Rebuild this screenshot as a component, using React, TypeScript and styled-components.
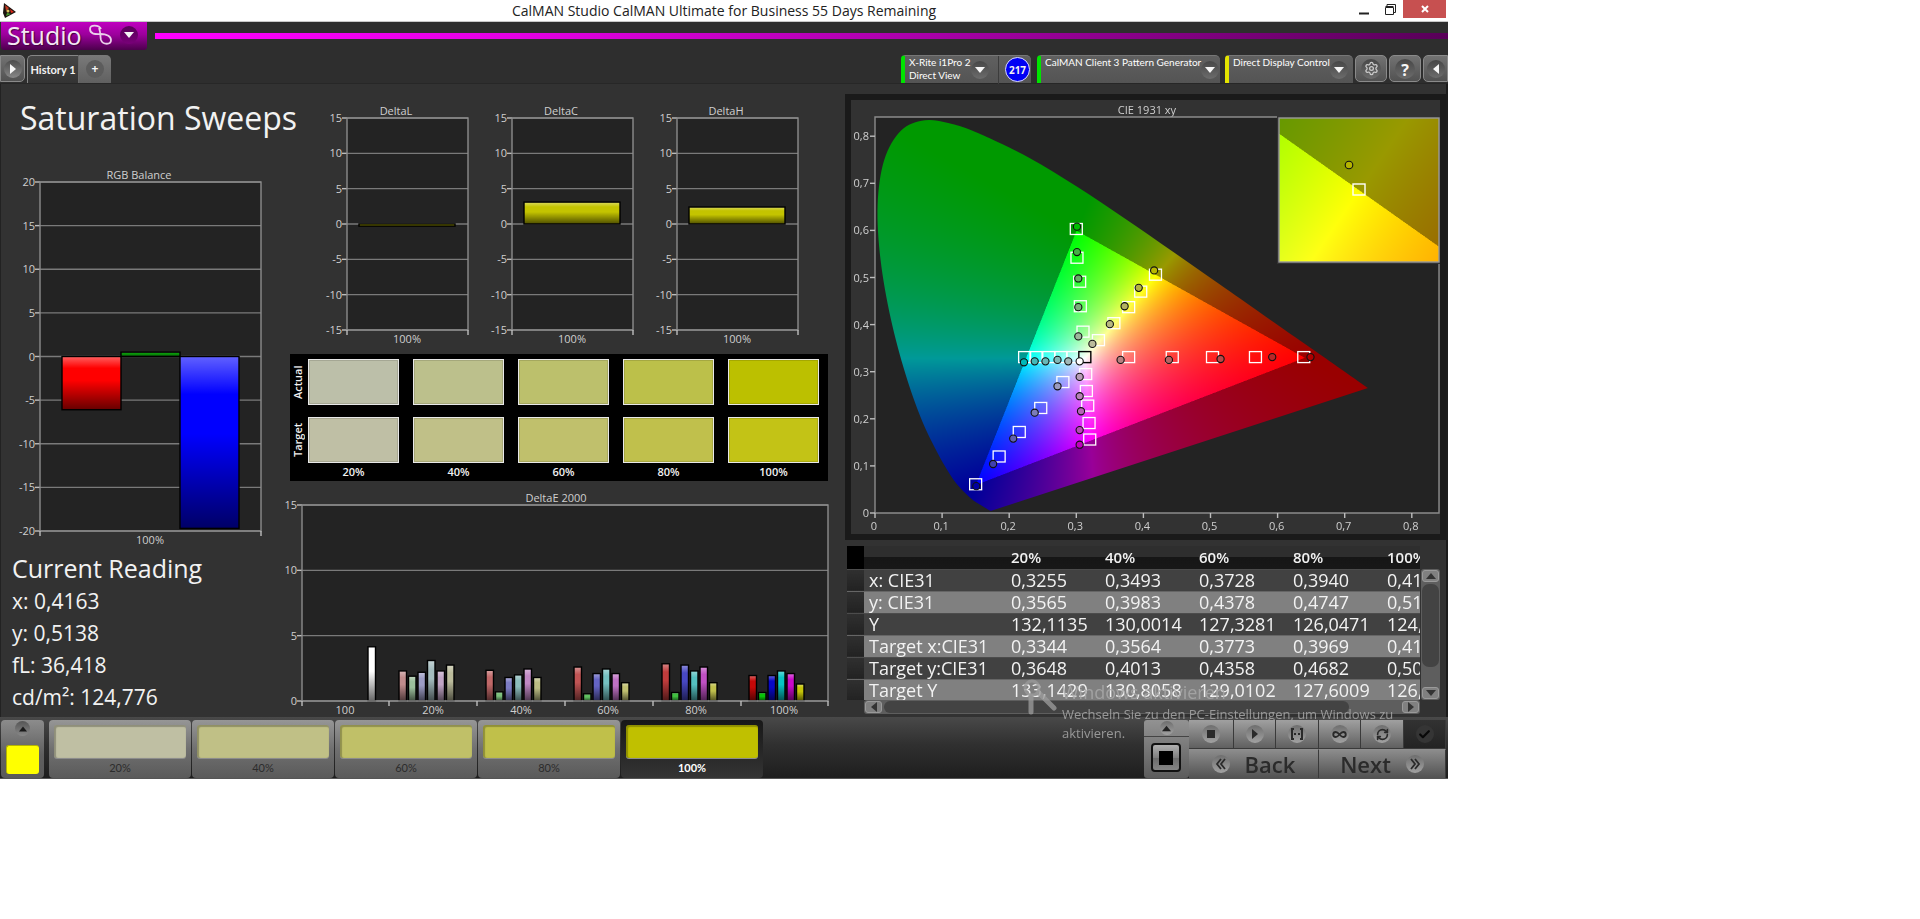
import React, { useEffect, useRef } from "react";
import styled, { createGlobalStyle } from "styled-components";
import { Check, Infinity as InfinityIcon, RefreshCw, Settings } from "lucide-react";

const UI_FONT = '"Open Sans", "Noto Sans", sans-serif';
const NARROW_FONT = 'Lato, "Open Sans", sans-serif';

const GlobalStyle = createGlobalStyle`
  *, *::before, *::after { box-sizing: border-box; }
  body { margin: 0; background: #fff; font-family: ${UI_FONT}; }
  button { font: inherit; color: inherit; border: 0; padding: 0; margin: 0; background: none; cursor: pointer; }
  h1, h2, p { margin: 0; font-weight: 400; }
`;

const Desktop = styled.div`
  display: grid;
  grid-template-columns: minmax(0, 1448fr) minmax(0, 472fr);
`;

const AppWindow = styled.div`
  position: relative;
  display: flex;
  flex-direction: column;
  background: #323232;
  color: #f2f2f2;
  border-bottom: 1px solid #555;
`;

/* ---------- window frame ---------- */

const TitleBar = styled.header`
  display: grid;
  grid-template-columns: 134px 1fr 134px;
  align-items: start;
  height: 22px;
  background: #fff;
  color: #222;
  border-bottom: 1px solid #c8c8c8;
`;

const AppIcon = styled.svg`
  margin: 3px 0 0 2px;
`;

const WindowTitle = styled.h1`
  font-size: 14px;
  line-height: 22px;
  text-align: center;
  white-space: nowrap;
`;

const WindowControls = styled.div`
  display: flex;
  justify-content: flex-end;
  align-items: stretch;
  height: 18px;
  padding-right: 2px;
`;

const WindowButton = styled.button<{ $close?: boolean }>`
  display: grid;
  place-items: center;
  width: ${(p) => (p.$close ? 43 : 26)}px;
  background: ${(p) => (p.$close ? "#c75050" : "transparent")};
`;

const Brand = styled.div`
  display: flex;
  align-items: flex-start;
  gap: 8px;
  height: 30px;
  padding-left: 1px;
  background: #2e2e2e;
`;

const StudioButton = styled.button`
  display: flex;
  align-items: center;
  width: 146px;
  height: 28px;
  padding: 0 5px 3px 6px;
  gap: 6px;
  border-radius: 0 0 3px 3px;
  background: linear-gradient(#c000c0, #9c009c 45%, #4c004c);
  color: #f4e8f4;
  font-size: 25px;
  line-height: 24px;
  text-shadow: 1px 1px 1px #400040;
`;

const MagentaRule = styled.div`
  flex: 1;
  height: 6px;
  margin-top: 11px;
  background: linear-gradient(90deg, #ff00ff, #e400e4 28%, #a800a8 60%, #580058);
`;

const RoundFace = styled.span<{ $tone?: string; $size?: number }>`
  display: grid;
  place-items: center;
  flex: none;
  width: ${(p) => p.$size ?? 18}px;
  height: ${(p) => p.$size ?? 18}px;
  border-radius: 50%;
  color: #f6f6f6;
  background: ${(p) => p.$tone ?? "linear-gradient(#474747, #6c6c6c)"};
`;

const TabStrip = styled.nav`
  display: flex;
  align-items: flex-start;
  height: 32px;
  padding-top: 3px;
  background: #2e2e2e;
  border-bottom: 1px solid #272727;
`;

const IconTab = styled.button<{ $width: number; $edge?: "left" | "right" }>`
  display: grid;
  place-items: center;
  width: ${(p) => p.$width}px;
  height: 27px;
  margin-right: 2px;
  border: 1px solid #8a8a8a;
  border-radius: ${(p) => (p.$edge === "left" ? "0 5px 5px 0" : p.$edge === "right" ? "5px 0 0 5px" : "5px")};
  background: linear-gradient(#727272, #525252);
  &:last-child { margin-right: 0; }
`;

const HistoryTab = styled.button`
  height: 28px;
  width: 52px;
  border: 1px solid #868686;
  border-bottom: 0;
  border-right-color: #6a6a6a;
  border-radius: 5px 0 0 0;
  background: linear-gradient(#464646, #333);
  font-size: 11px;
  font-weight: 700;
  font-family: ${NARROW_FONT};
  white-space: nowrap;
`;

const AddTab = styled.button`
  display: grid;
  place-items: center;
  width: 32px;
  height: 28px;
  border-radius: 0 5px 0 0;
  background: linear-gradient(#7a7a7a, #606060);
  font-size: 12px;
  font-weight: 700;
  line-height: 12px;
`;

const StripSpacer = styled.div`
  flex: 1;
`;

const DeviceTab = styled.button<{ $accent: string; $width: number; $gap: number }>`
  display: flex;
  align-items: center;
  width: ${(p) => p.$width}px;
  height: 28px;
  margin-right: ${(p) => p.$gap}px;
  padding: 0 7px 0 4px;
  border-left: 4px solid ${(p) => p.$accent};
  border-top: 1px solid #777;
  border-radius: 4px 5px 0 0;
  background: linear-gradient(#606060, #545454);
  text-align: left;
`;

const DeviceLabel = styled.span`
  flex: 1;
  align-self: flex-start;
  font-family: ${NARROW_FONT};
  font-size: 10px;
  line-height: 13px;
  font-weight: 400;
  color: #fff;
  white-space: pre;
`;

const Countdown = styled.span`
  display: grid;
  place-items: center;
  flex: none;
  width: 25px;
  height: 25px;
  margin: 0 -6px 0 7px;
  border: 1px solid #dcdcff;
  border-radius: 50%;
  background: #0000f5;
  font-size: 10px;
  font-weight: 700;
`;

const TabDivider = styled.span`
  width: 1px;
  height: 28px;
  margin-left: 9px;
  background: #3c3c3c;
`;

/* ---------- work area ---------- */

const Workspace = styled.main`
  display: grid;
  grid-template-columns: minmax(0, 280fr) minmax(0, 562fr) minmax(0, 606fr);
  box-shadow: inset 1px 0 #222, inset -2px 0 #1c1c1c;
`;

const Column = styled.section`
  display: flex;
  flex-direction: column;
`;

const PageHeading = styled.h2`
  height: 80px;
  padding: 14px 0 0 20px;
  font-size: 32px;
  line-height: 40px;
  white-space: nowrap;
`;

const Readings = styled.div`
  padding: 1px 0 0 12px;
`;

const ReadingsTitle = styled.h2`
  font-size: 25px;
  line-height: 34px;
  white-space: nowrap;
`;

const Reading = styled.p`
  font-size: 21px;
  line-height: 32px;
  white-space: nowrap;
`;

const ChartSvg = styled.svg`
  display: block;
  width: 100%;
  height: auto;
  font-family: ${UI_FONT};
  font-size: 11px;
  fill: #cfcfcf;
`;

const DeltaRow = styled.div`
  display: grid;
  grid-template-columns: repeat(3, minmax(0, 1fr));
  margin: 0 27px 0 40px;
`;

const SwatchPanel = styled.div`
  display: grid;
  grid-template-columns: 4px repeat(5, minmax(0, 1fr));
  grid-template-rows: 46px 46px 18px;
  column-gap: 14px;
  row-gap: 12px;
  height: 127px;
  margin: 0 14px 0 10px;
  padding: 5px 9px 0 0;
  background: #000;
`;

const SwatchRowLabel = styled.span`
  display: grid;
  place-items: center;
  width: 16px;
  writing-mode: vertical-rl;
  transform: rotate(180deg);
  font-size: 11px;
  line-height: 16px;
  font-weight: 600;
`;

const Swatch = styled.div<{ $color: string }>`
  border: 1px solid #e8e8e8;
  background: ${(p) => p.$color};
  box-shadow: inset 0 0 0 1px rgba(0, 0, 0, 0.12);
`;

const SwatchCaption = styled.span`
  margin-top: -12px;
  font-size: 11px;
  line-height: 18px;
  font-weight: 600;
  text-align: center;
`;

const CiePanel = styled.div`
  display: grid;
  margin: 10px 2px 0 3px;
  border: 6px solid #1a1a1a;
  background: #323232;
  & > * { grid-area: 1 / 1; }
`;

const DiagramCanvas = styled.canvas`
  width: 100%;
  height: 100%;
`;

/* ---------- data grid ---------- */

const GridArea = styled.div`
  display: grid;
  grid-template-columns: minmax(0, 1fr) 20px;
  grid-template-rows: 154px 14px;
  margin: 6px 8px 3px 5px;
`;

const TableClip = styled.div`
  overflow: hidden;
`;

const DataTable = styled.table`
  border-collapse: collapse;
  table-layout: fixed;
  width: 634px;
  font-size: 18px;
  white-space: nowrap;
  th, td { padding: 0; text-align: left; font-weight: 400; }
`;

const HeadRow = styled.tr`
  height: 23px;
  font-size: 15px;
  line-height: 22px;
  background: linear-gradient(#2e2e2e 50%, #161616 50%, #181818);
  th { font-weight: 600; }
  th:first-child { background: #000; }
`;

const BodyRow = styled.tr<{ $alt: boolean }>`
  height: 22px;
  line-height: 21px;
  background: ${(p) => (p.$alt ? "#808080" : "#414141")};
  border-top: 1px solid ${(p) => (p.$alt ? "#666" : "#4c4c4c")};
  td:first-child { background: linear-gradient(#303030, #222); }
  th { padding-left: 5px; }
`;

const ScrollTrack = styled.div<{ $vertical?: boolean }>`
  display: flex;
  flex-direction: ${(p) => (p.$vertical ? "column" : "row")};
  justify-content: space-between;
  gap: 2px;
  margin: ${(p) => (p.$vertical ? "23px 0 0 1px" : "0 0 0 17px")};
  padding: 1px;
  border-radius: 3px;
  background: #5e5e5e;
`;

const ScrollButton = styled.button<{ $vertical?: boolean }>`
  display: grid;
  place-items: center;
  flex: none;
  width: 17px;
  height: 12px;
  border: 1px solid #9a9a9a;
  border-radius: 3px;
  background: #808080;
`;

const ScrollThumb = styled.div<{ $vertical?: boolean }>`
  flex: none;
  width: ${(p) => (p.$vertical ? "17px" : "84%")};
  height: ${(p) => (p.$vertical ? "83px" : "12px")};
  margin-right: auto;
  margin-bottom: ${(p) => (p.$vertical ? "auto" : "0")};
  border-radius: 7px;
  background: #434343;
`;

/* ---------- bottom bar ---------- */

const BottomBar = styled.footer`
  display: flex;
  align-items: stretch;
  height: 61px;
  padding: 3px 2px 0 1px;
  background: linear-gradient(#494949, #303030 45%, #1e1e1e);
`;

const PatternToggle = styled.button`
  display: flex;
  flex-direction: column;
  align-items: center;
  justify-content: space-between;
  width: 43px;
  height: 58px;
  padding: 1px 5px 4px;
  margin-right: 5px;
  border-radius: 4px;
  background: linear-gradient(#8c8c8c, #606060 60%, #5a5a5a);
`;

const PatternColor = styled.span`
  width: 33px;
  height: 29px;
  border-radius: 3px;
  border: 1px solid #b4b400;
  border-width: 1px 0 0 1px;
  background: #ff0;
`;

const StepButton = styled.button<{ $active?: boolean }>`
  display: flex;
  flex-direction: column;
  width: 142px;
  height: 58px;
  margin-right: 1px;
  padding: 5px 5px 0;
  border-radius: 4px;
  background: ${(p) => (p.$active ? "linear-gradient(#181818, #343434)" : "linear-gradient(#969696, #707070 50%, #5a5a5a)")};
  color: ${(p) => (p.$active ? "#fff" : "#2c2c2c")};
  font-family: ${NARROW_FONT};
  font-size: 11px;
  font-weight: ${(p) => (p.$active ? 700 : 400)};
  line-height: 20px;
  text-align: center;
`;

const StepColor = styled.span<{ $color: string }>`
  width: 100%;
  height: 34px;
  border-radius: 3px;
  background: ${(p) => p.$color};
  box-shadow: inset 1px 1px 1px 1px rgba(0, 0, 0, 0.25), 0 1px 0 #8c8c8c;
`;

const StepText = styled.span`
  width: 100%;
`;

const LevelControl = styled.div`
  position: relative;
  z-index: 2;
  display: flex;
  flex-direction: column;
  width: 45px;
  height: 58px;
  background: linear-gradient(#929292, #5c5c5c);
  border-radius: 3px;
`;

const LevelUp = styled.button`
  display: grid;
  place-items: center;
  height: 17px;
  border-bottom: 1px solid #444;
`;

const LevelWindow = styled.button`
  display: grid;
  place-items: center;
  width: 30px;
  height: 29px;
  margin: 6px auto 0 7px;
  border: 2px solid #111;
  border-radius: 4px;
  background: linear-gradient(#b0b0b0, #808080 50%, #6a6a6a 50%, #858585);
`;

const Transport = styled.div`
  position: relative;
  z-index: 2;
  display: grid;
  grid-template-columns: 45px 42px 43px 42px 43px 42px;
  grid-template-rows: 29px 29px;
`;

const TransportButton = styled.button<{ $off?: boolean }>`
  display: grid;
  place-items: center;
  border: 1px solid #3a3a3a;
  border-width: 0 1px 1px 0;
  background: ${(p) => (p.$off ? "linear-gradient(#323232, #232323)" : "linear-gradient(#a0a0a0, #606060)")};
`;

const StepNav = styled.button`
  grid-column: span 3;
  display: flex;
  align-items: center;
  justify-content: center;
  gap: 15px;
  border-right: 1px solid #3a3a3a;
  border-top: 1px solid #8e8e8e;
  background: linear-gradient(#8c8c8c, #525252);
  color: #2b2b2b;
  font-size: 22px;
  font-weight: 600;
  line-height: 26px;
`;

const BarSpacer = styled.div`
  flex: 1;
`;

/* notice of the operating system that floats over the window */
const Activation = styled.aside`
  position: absolute;
  right: 36px;
  bottom: 35px;
  display: grid;
  grid-template-columns: 39px 350px;
  color: rgba(168, 168, 168, 0.85);
  font-size: 13px;
  line-height: 19px;
  pointer-events: none;
`;

const ActivationTitle = styled.p`
  font-size: 18px;
  line-height: 26px;
`;

/* ---------- charts ---------- */

type Bar = { x: number; w: number; value: number; color: string };

type ChartProps = {
  view: string;
  title: string;
  titleX: number;
  left: number;
  right: number;
  top: number;
  bottom: number;
  min: number;
  max: number;
  ticks: number[];
  xTicks: number[];
  xLabels: { x: number; text: string }[];
  bars: Bar[];
};

function BarShade() {
  return (
    <linearGradient id="bar-shade" x1="0" y1="0" x2="0" y2="1">
      <stop offset="0" stopColor="#fff" stopOpacity="0.38" />
      <stop offset="0.22" stopColor="#fff" stopOpacity="0" />
      <stop offset="0.45" stopColor="#000" stopOpacity="0" />
      <stop offset="1" stopColor="#000" stopOpacity="0.6" />
    </linearGradient>
  );
}

function BarChart(c: ChartProps) {
  const yOf = (v: number) => c.bottom - ((v - c.min) / (c.max - c.min)) * (c.bottom - c.top);
  const base = yOf(0);
  return (
    <ChartSvg viewBox={c.view} role="img" aria-label={c.title}>
      <defs>
        <BarShade />
      </defs>
      <text x={c.titleX} y={c.top - 3} textAnchor="middle">{c.title}</text>
      <rect x={c.left} y={c.top} width={c.right - c.left} height={c.bottom - c.top} fill="#232323" />
      {c.ticks.map((t) => (
        <g key={t}>
          <line x1={c.left} x2={c.right} y1={yOf(t)} y2={yOf(t)} stroke="#7a7a7a" strokeWidth="1.4" />
          <line x1={c.left - 5} x2={c.left} y1={yOf(t)} y2={yOf(t)} stroke="#bdbdbd" strokeWidth="1.4" />
          <text x={c.left - 5} y={yOf(t) + 4} textAnchor="end">{t}</text>
        </g>
      ))}
      {c.bars.map((b, i) => {
        const y = Math.min(base, yOf(b.value));
        const h = Math.abs(base - yOf(b.value));
        return (
          <g key={i}>
            <rect x={b.x} y={y} width={b.w} height={h} fill={b.color} />
            <rect x={b.x} y={y} width={b.w} height={h} fill="url(#bar-shade)" stroke="#000" strokeWidth="1.4" />
          </g>
        );
      })}
      <rect x={c.left} y={c.top} width={c.right - c.left} height={c.bottom - c.top} fill="none" stroke="#8c8c8c" strokeWidth="1.4" />
      {c.xTicks.map((x) => (
        <line key={x} x1={x} x2={x} y1={c.bottom} y2={c.bottom + 5} stroke="#bdbdbd" strokeWidth="1.4" />
      ))}
      {c.xLabels.map((l) => (
        <text key={l.text} x={l.x} y={c.bottom + 13} textAnchor="middle">{l.text}</text>
      ))}
    </ChartSvg>
  );
}

const DELTAS = [
  { title: "DeltaL", value: -0.3, color: "#b4b400" },
  { title: "DeltaC", value: 3.1, color: "#c4c400" },
  { title: "DeltaH", value: 2.4, color: "#c4c400" },
];

const DELTA_E = [
  { label: "100", first: 368, x: 345, values: [4.15], colors: ["#ffffff"] },
  { label: "20%", first: 399, x: 433, values: [2.3, 1.9, 2.2, 3.1, 2.3, 2.75], colors: ["#c08c8c", "#9cc09c", "#9c9cc4", "#a4bcbe", "#c0a4c4", "#bcbc9c"] },
  { label: "40%", first: 486, x: 521, values: [2.35, 0.7, 1.8, 2.0, 2.45, 1.8], colors: ["#c06868", "#7cc07c", "#7c7cc4", "#8cbcbc", "#c088c4", "#bcbc84"] },
  { label: "60%", first: 574, x: 608, values: [2.6, 0.55, 2.1, 2.45, 2.1, 1.4], colors: ["#c05454", "#60c060", "#6464c4", "#74c0c0", "#c070c4", "#c0c070"] },
  { label: "80%", first: 662, x: 696, values: [2.85, 0.65, 2.75, 2.3, 2.6, 1.4], colors: ["#c03c3c", "#40c040", "#4848c4", "#54c0c0", "#c050c4", "#c0c04c"] },
  { label: "100%", first: 749, x: 784, values: [1.95, 0.65, 1.95, 2.3, 2.1, 1.3], colors: ["#c40808", "#08c408", "#0808c4", "#08c4c4", "#c808c8", "#c4c408"] },
];

/* ---------- CIE diagram ---------- */

const CIE_BOX = { x: 851, y: 100, w: 589, h: 434 };
const cieX = (x: number) => 875 + x * 671;
const cieY = (y: number) => 513 - y * 471;

const LOCUS: [number, number][] = [
  [0.1741, 0.005], [0.1714, 0.0051], [0.1644, 0.0109], [0.1566, 0.0177], [0.144, 0.0297], [0.1241, 0.0578],
  [0.1096, 0.0868], [0.0913, 0.1327], [0.0687, 0.2007], [0.0454, 0.295], [0.0235, 0.4127], [0.0082, 0.5384],
  [0.0039, 0.6548], [0.0139, 0.7502], [0.0389, 0.812], [0.0743, 0.8338], [0.1142, 0.8262], [0.1547, 0.8059],
  [0.2296, 0.7543], [0.3016, 0.6923], [0.3731, 0.6245], [0.4441, 0.5547], [0.5125, 0.4866], [0.5752, 0.4242],
  [0.627, 0.3725], [0.6658, 0.334], [0.6915, 0.3083], [0.719, 0.2809], [0.7347, 0.2653],
];

const TARGETS: [number, number][] = [
  [0.3, 0.603], [0.301, 0.542], [0.305, 0.491], [0.306, 0.439], [0.31, 0.385],
  [0.418, 0.506], [0.396, 0.47], [0.378, 0.437], [0.356, 0.403], [0.333, 0.367],
  [0.223, 0.331], [0.24, 0.331], [0.259, 0.331], [0.277, 0.331], [0.295, 0.331],
  [0.314, 0.295], [0.315, 0.259], [0.317, 0.228], [0.319, 0.191], [0.32, 0.156],
  [0.28, 0.278], [0.247, 0.223], [0.215, 0.172], [0.185, 0.12], [0.15, 0.061],
  [0.378, 0.331], [0.443, 0.331], [0.503, 0.331], [0.567, 0.331], [0.639, 0.331],
];

const READINGS: [number, number, string][] = [
  [0.301, 0.608, "#00c000"], [0.301, 0.554, "#44b044"], [0.303, 0.498, "#64b064"], [0.303, 0.437, "#7cb07c"], [0.303, 0.375, "#9cb89c"],
  [0.416, 0.515, "#b8b800"], [0.393, 0.478, "#b4b440"], [0.372, 0.439, "#b4b460"], [0.35, 0.401, "#b8b880"], [0.324, 0.359, "#bcbc9c"],
  [0.222, 0.32, "#00b8b8"], [0.238, 0.322, "#44b8b8"], [0.254, 0.322, "#68b8b8"], [0.272, 0.325, "#80b8b8"], [0.288, 0.322, "#a0b8b8"],
  [0.305, 0.322, "#ffffff"],
  [0.305, 0.289, "#b89cb8"], [0.305, 0.248, "#b880b8"], [0.307, 0.216, "#b864b8"], [0.305, 0.176, "#b848b8"], [0.305, 0.145, "#c000c0"],
  [0.272, 0.269, "#9c9cc0"], [0.238, 0.213, "#7c7cb8"], [0.206, 0.158, "#6060b0"], [0.176, 0.104, "#4040b0"], [0.151, 0.057, "#0000a0"],
  [0.366, 0.325, "#b88080"], [0.438, 0.325, "#b86464"], [0.515, 0.327, "#b84848"], [0.592, 0.331, "#b82828"], [0.649, 0.331, "#b00000"],
];

/* linear RGB mix of a chromaticity at full drive; colours out of gamut are dimmed */
function chromaColor(x: number, y: number): [number, number, number] {
  const sy = Math.max(y, 0.0001);
  const X = x / sy;
  const Z = (1 - x - y) / sy;
  const lin = [
    3.2406 * X - 1.5372 - 0.4986 * Z,
    -0.9689 * X + 1.8758 + 0.0415 * Z,
    0.0557 * X - 0.204 + 1.057 * Z,
  ];
  const peak = Math.max(lin[0], lin[1], lin[2]);
  const level = Math.min(lin[0], lin[1], lin[2]) < 0 ? 153 : 255;
  return lin.map((v) => (level * Math.max(v, 0)) / peak) as [number, number, number];
}

function paint(w: number, h: number, at: (px: number, py: number) => [number, number]) {
  const layer = document.createElement("canvas");
  layer.width = w;
  layer.height = h;
  const ctx = layer.getContext("2d")!;
  const image = ctx.createImageData(w, h);
  for (let j = 0; j < h; j++) {
    for (let i = 0; i < w; i++) {
      const [x, y] = at(i, j);
      const rgb = chromaColor(x, y);
      image.data.set([rgb[0], rgb[1], rgb[2], 255], (j * w + i) * 4);
    }
  }
  ctx.putImageData(image, 0, 0);
  return layer;
}

function CieDiagram() {
  const ref = useRef<HTMLCanvasElement>(null);
  useEffect(() => {
    const ctx = ref.current?.getContext("2d");
    if (!ctx) return;
    const k = 2;
    const px = (x: number) => (cieX(x) - CIE_BOX.x) * k;
    const py = (y: number) => (cieY(y) - CIE_BOX.y) * k;
    ctx.clearRect(0, 0, CIE_BOX.w * k, CIE_BOX.h * k);
    ctx.fillStyle = "#232323";
    ctx.fillRect(px(0), 17 * k, 564 * k, 396 * k);
    ctx.save();
    ctx.beginPath();
    const at = (i: number) => LOCUS[Math.max(0, Math.min(LOCUS.length - 1, i))];
    ctx.moveTo(px(LOCUS[0][0]), py(LOCUS[0][1]));
    for (let i = 0; i < LOCUS.length - 1; i++) {
      const [a, b, c, d] = [at(i - 1), at(i), at(i + 1), at(i + 2)];
      ctx.bezierCurveTo(
        px(b[0] + (c[0] - a[0]) / 6), py(b[1] + (c[1] - a[1]) / 6),
        px(c[0] - (d[0] - b[0]) / 6), py(c[1] - (d[1] - b[1]) / 6),
        px(c[0]), py(c[1]),
      );
    }
    ctx.closePath();
    ctx.clip();
    const field = paint(CIE_BOX.w * k, CIE_BOX.h * k, (i, j) => [
      (i / k + CIE_BOX.x - 875) / 671,
      (513 - j / k - CIE_BOX.y) / 471,
    ]);
    ctx.drawImage(field, 0, 0);
    ctx.restore();
    ctx.fillStyle = "#323232";
    ctx.fillRect(426 * k, 16 * k, 163 * k, 148 * k);
    const detail = paint(160 * k, 144 * k, (i, j) => [
      0.4193 + (i / k - 80) / 3000,
      0.5053 - (j / k - 72) / 2670,
    ]);
    ctx.drawImage(detail, 428 * k, 18 * k);
  }, []);

  return (
    <CiePanel>
      <DiagramCanvas ref={ref} width={CIE_BOX.w * 2} height={CIE_BOX.h * 2} />
      <ChartSvg viewBox={`${CIE_BOX.x} ${CIE_BOX.y} ${CIE_BOX.w} ${CIE_BOX.h}`} role="img" aria-label="CIE 1931 xy">
        <text x="1147" y="114" textAnchor="middle">CIE 1931 xy</text>
        <path d="M1277 117H875V513H1439V264" fill="none" stroke="#8c8c8c" strokeWidth="1.4" />
        {[0, 1, 2, 3, 4, 5, 6, 7, 8].map((n) => (
          <g key={n}>
            <line x1="870" x2="875" y1={cieY(n / 10)} y2={cieY(n / 10)} stroke="#bdbdbd" strokeWidth="1.4" />
            <text x="869" y={cieY(n / 10) + 4} textAnchor="end">{n ? `0,${n}` : "0"}</text>
            <line x1={cieX(n / 10)} x2={cieX(n / 10)} y1="513" y2="518" stroke="#bdbdbd" strokeWidth="1.4" />
            <text x={cieX(n / 10) - 1} y="530" textAnchor="middle">{n ? `0,${n}` : "0"}</text>
          </g>
        ))}
        {TARGETS.map(([x, y], i) => (
          <rect key={i} x={cieX(x) - 6} y={cieY(y) - 5.5} width="12" height="11" fill="none" stroke="#fff" strokeWidth="1.3" />
        ))}
        <rect x={cieX(0.3127) - 6} y={cieY(0.331) - 5.5} width="12" height="11" fill="none" stroke="#000" strokeWidth="1.4" />
        {READINGS.map(([x, y, color], i) => (
          <circle key={i} cx={cieX(x)} cy={cieY(y)} r="3.6" fill={color} stroke="#111" strokeWidth="1.1" />
        ))}
        <rect x="1279" y="118" width="160" height="144" fill="none" stroke="#9a9a9a" strokeWidth="1.4" />
        <circle cx="1349" cy="165" r="3.8" fill="#b4b400" stroke="#111" strokeWidth="1.1" />
        <rect x="1353" y="184" width="12" height="11" fill="none" stroke="#fff" strokeWidth="1.4" />
      </ChartSvg>
    </CiePanel>
  );
}

/* ---------- small drawings ---------- */

function Arrow({ dir, size = 10, color = "currentColor" }: { dir: "up" | "down" | "left" | "right"; size?: number; color?: string }) {
  const shapes = { up: "M0 8L5 2L10 8Z", down: "M0 2L5 8L10 2Z", left: "M8 0L2 5L8 10Z", right: "M2 0L8 5L2 10Z" };
  return (
    <svg width={size} height={size} viewBox="0 0 10 10" aria-hidden="true">
      <path d={shapes[dir]} fill={color} />
    </svg>
  );
}

const LIGHT_FACE = "linear-gradient(#6e6e6e, #a2a2a2)";

const ROWS = [
  ["x: CIE31", "0,3255", "0,3493", "0,3728", "0,3940", "0,4163"],
  ["y: CIE31", "0,3565", "0,3983", "0,4378", "0,4747", "0,5138"],
  ["Y", "132,1135", "130,0014", "127,3281", "126,0471", "124,7760"],
  ["Target x:CIE31", "0,3344", "0,3564", "0,3773", "0,3969", "0,4193"],
  ["Target y:CIE31", "0,3648", "0,4013", "0,4358", "0,4682", "0,5053"],
  ["Target Y", "133,1429", "130,8058", "129,0102", "127,6009", "126,5500"],
];

const LEVELS = ["20%", "40%", "60%", "80%", "100%"];
const ACTUAL = ["#bcbfa9", "#bcc08c", "#bcc06c", "#bcc04a", "#bcc000"];
const TARGET = ["#bfbfa5", "#c0c088", "#c0c06c", "#c0c04c", "#c3c316"];
const STEPS = ["#bfbfa3", "#c0c086", "#c0c068", "#c0c04a", "#c0c000"];

export default function App() {
  return (
    <Desktop>
      <GlobalStyle />
      <AppWindow>
        <TitleBar>
          <AppIcon width="14" height="15" viewBox="0 0 14 15" aria-hidden="true">
            <path d="M2 0L14 9L3 15L1 10Z" fill="#1c1410" />
            <path d="M3 2L7 5L4 8Z" fill="#c03820" />
            <path d="M8 6L12 9L9 10Z" fill="#e02818" />
            <path d="M4 13L9 11L5 10Z" fill="#48a030" />
            <circle cx="6" cy="8" r="1.500" fill="#d8c060" />
          </AppIcon>
          <WindowTitle>CalMAN Studio CalMAN Ultimate for Business 55 Days Remaining</WindowTitle>
          <WindowControls>
            <WindowButton aria-label="Minimize">
              <svg width="12" height="12"><path d="M1 10.500H11" stroke="#222" strokeWidth="2" /></svg>
            </WindowButton>
            <WindowButton aria-label="Restore">
              <svg width="13" height="13" fill="none" stroke="#222">
                <path d="M3 3V1.500H11.500V9.500H10" />
                <path d="M1.500 4.500H9.500V11.500H1.500ZM1.500 3.500H9.500" />
              </svg>
            </WindowButton>
            <WindowButton $close aria-label="Close">
              <svg width="8" height="8"><path d="M1 1L7 7M7 1L1 7" stroke="#fff" strokeWidth="2" /></svg>
            </WindowButton>
          </WindowControls>
        </TitleBar>

        <Brand>
          <StudioButton>
            Studio
            <svg width="26" height="22" viewBox="0 0 26 22" fill="none" stroke="#ead0ea" strokeWidth="1.800" aria-hidden="true">
              <path d="M13 5C11 1 2 0 2 5C2 11 9 10 13 10C18 10 23 12 23 16C23 21 15 21 13 16C12 13 13 9 11 4" />
            </svg>
            <RoundFace $tone="linear-gradient(#580058, #780078)"><Arrow dir="down" /></RoundFace>
          </StudioButton>
          <MagentaRule />
        </Brand>

        <TabStrip>
          <IconTab $width={25} $edge="left" aria-label="Show panel">
            <RoundFace $tone="linear-gradient(#4c4c4c, #888)"><Arrow dir="right" /></RoundFace>
          </IconTab>
          <HistoryTab>History 1</HistoryTab>
          <AddTab aria-label="Add history"><RoundFace $tone="#5c5c5c">+</RoundFace></AddTab>
          <StripSpacer />
          <DeviceTab $accent="#00e400" $width={130} $gap={6}>
            <DeviceLabel>{"X-Rite i1Pro 2\nDirect View"}</DeviceLabel>
            <RoundFace><Arrow dir="down" /></RoundFace>
            <TabDivider />
            <Countdown>217</Countdown>
          </DeviceTab>
          <DeviceTab $accent="#00e400" $width={183} $gap={5}>
            <DeviceLabel>CalMAN Client 3 Pattern Generator</DeviceLabel>
            <RoundFace><Arrow dir="down" /></RoundFace>
          </DeviceTab>
          <DeviceTab $accent="#e4e400" $width={128} $gap={2}>
            <DeviceLabel>Direct Display Control</DeviceLabel>
            <RoundFace><Arrow dir="down" /></RoundFace>
          </DeviceTab>
          <IconTab $width={32} aria-label="Settings"><RoundFace $size={20}><Settings size={15} color="#ccc" /></RoundFace></IconTab>
          <IconTab $width={32} aria-label="Help"><RoundFace $size={20}><b>?</b></RoundFace></IconTab>
          <IconTab $width={25} $edge="right" aria-label="Hide panel"><RoundFace><Arrow dir="left" /></RoundFace></IconTab>
        </TabStrip>

        <Workspace>
          <Column>
            <PageHeading>Saturation Sweeps</PageHeading>
            <BarChart
              view="0 164 280 386"
              title="RGB Balance" titleX={139} left={40} right={261} top={182} bottom={531} min={-20} max={20}
              ticks={[20, 15, 10, 5, 0, -5, -10, -15, -20]}
              xTicks={[40, 261]}
              xLabels={[{ x: 150, text: "100%" }]}
              bars={[
                { x: 62, w: 59, value: -6.1, color: "#ff0000" },
                { x: 121, w: 59, value: 0.5, color: "#0a960a" },
                { x: 180, w: 59, value: -19.7, color: "#0000ff" },
              ]}
            />
            <Readings>
              <ReadingsTitle>Current Reading</ReadingsTitle>
              <Reading>x: 0,4163</Reading>
              <Reading>y: 0,5138</Reading>
              <Reading>fL: 36,418</Reading>
              <Reading>cd/m²: 124,776</Reading>
            </Readings>
          </Column>

          <Column>
            <DeltaRow>
              {DELTAS.map((d) => (
                <BarChart
                  key={d.title}
                  view="320 84 165 270"
                  title={d.title} titleX={396} left={347} right={468} top={118} bottom={330} min={-15} max={15}
                  ticks={[15, 10, 5, 0, -5, -10, -15]}
                  xTicks={[347, 468]}
                  xLabels={[{ x: 407, text: "100%" }]}
                  bars={[{ x: 359, w: 96, value: d.value, color: d.color }]}
                />
              ))}
            </DeltaRow>
            <SwatchPanel>
              <SwatchRowLabel>Actual</SwatchRowLabel>
              {ACTUAL.map((c) => <Swatch key={c} $color={c} />)}
              <SwatchRowLabel>Target</SwatchRowLabel>
              {TARGET.map((c) => <Swatch key={c} $color={c} />)}
              <span />
              {LEVELS.map((l) => <SwatchCaption key={l}>{l}</SwatchCaption>)}
            </SwatchPanel>
            <BarChart
              view="280 481 562 235"
              title="DeltaE 2000" titleX={556} left={302} right={828} top={505} bottom={701} min={0} max={15}
              ticks={[15, 10, 5, 0]}
              xTicks={[302, 389, 477, 565, 653, 741, 828]}
              xLabels={DELTA_E.map((g) => ({ x: g.x, text: g.label }))}
              bars={DELTA_E.flatMap((g) => g.values.map((value, i) => ({ x: g.first + i * 9.5, w: 7.5, value, color: g.colors[i] })))}
            />
          </Column>

          <Column>
            <CieDiagram />
            <GridArea>
              <TableClip>
                <DataTable>
                  <colgroup>
                    <col style={{ width: 17 }} />
                    <col style={{ width: 147 }} />
                    {LEVELS.map((l) => <col key={l} style={{ width: 94 }} />)}
                  </colgroup>
                  <thead>
                    <HeadRow>
                      <th aria-label="Row" />
                      <th aria-label="Quantity" />
                      {LEVELS.map((l) => <th key={l} scope="col">{l}</th>)}
                    </HeadRow>
                  </thead>
                  <tbody>
                    {ROWS.map(([name, ...values], i) => (
                      <BodyRow key={name} $alt={i % 2 === 1}>
                        <td />
                        <th scope="row">{name}</th>
                        {values.map((v) => <td key={v}>{v}</td>)}
                      </BodyRow>
                    ))}
                  </tbody>
                </DataTable>
              </TableClip>
              <ScrollTrack $vertical>
                <ScrollButton aria-label="Scroll up"><Arrow dir="up" color="#333" /></ScrollButton>
                <ScrollThumb $vertical />
                <ScrollButton aria-label="Scroll down"><Arrow dir="down" color="#333" /></ScrollButton>
              </ScrollTrack>
              <ScrollTrack>
                <ScrollButton aria-label="Scroll left"><Arrow dir="left" color="#333" /></ScrollButton>
                <ScrollThumb />
                <ScrollButton aria-label="Scroll right"><Arrow dir="right" color="#333" /></ScrollButton>
              </ScrollTrack>
            </GridArea>
          </Column>
        </Workspace>

        <BottomBar>
          <PatternToggle aria-label="Pattern color">
            <RoundFace $size={15} $tone="linear-gradient(#555, #888)"><Arrow dir="up" size={8} color="#1a1a1a" /></RoundFace>
            <PatternColor />
          </PatternToggle>
          {LEVELS.map((l, i) => (
            <StepButton key={l} $active={l === "100%"}>
              <StepColor $color={STEPS[i]} />
              <StepText>{l}</StepText>
            </StepButton>
          ))}
          <BarSpacer />
          <LevelControl>
            <LevelUp aria-label="Raise level">
              <RoundFace $size={14} $tone={LIGHT_FACE}><Arrow dir="up" size={9} color="#222" /></RoundFace>
            </LevelUp>
            <LevelWindow aria-label="Window size">
              <svg width="14" height="14"><rect width="14" height="14" /></svg>
            </LevelWindow>
          </LevelControl>
          <Transport>
            <TransportButton aria-label="Stop"><RoundFace $tone={LIGHT_FACE}><svg width="8" height="8"><rect width="8" height="8" fill="#2a2a2a" /></svg></RoundFace></TransportButton>
            <TransportButton aria-label="Play"><RoundFace $tone={LIGHT_FACE}><Arrow dir="right" color="#2a2a2a" /></RoundFace></TransportButton>
            <TransportButton aria-label="Read series">
              <RoundFace $tone={LIGHT_FACE}>
                <svg width="14" height="12" viewBox="0 0 14 12" fill="none" stroke="#2a2a2a" strokeWidth="2">
                  <path d="M4 1H2V11H4M10 1H12V11H10M4 6H6M8 6H10" />
                </svg>
              </RoundFace>
            </TransportButton>
            <TransportButton aria-label="Continuous"><RoundFace $tone={LIGHT_FACE}><InfinityIcon size={15} color="#2a2a2a" strokeWidth={3} /></RoundFace></TransportButton>
            <TransportButton aria-label="Refresh"><RoundFace $tone={LIGHT_FACE}><RefreshCw size={13} color="#2a2a2a" strokeWidth={3} /></RoundFace></TransportButton>
            <TransportButton $off aria-label="Done"><RoundFace $tone="#353535"><Check size={13} color="#080808" strokeWidth={4} /></RoundFace></TransportButton>
            <StepNav>
              <RoundFace $tone={LIGHT_FACE}>
                <svg width="12" height="12" viewBox="0 0 12 12" fill="none" stroke="#2a2a2a" strokeWidth="1.800"><path d="M6 1L2 6L6 11M10 1L6 6L10 11" /></svg>
              </RoundFace>
              Back
            </StepNav>
            <StepNav>
              Next
              <RoundFace $tone={LIGHT_FACE}>
                <svg width="12" height="12" viewBox="0 0 12 12" fill="none" stroke="#2a2a2a" strokeWidth="1.800"><path d="M2 1L6 6L2 11M6 1L10 6L6 11" /></svg>
              </RoundFace>
            </StepNav>
          </Transport>
        </BottomBar>

        <Activation>
          <svg width="34" height="36" viewBox="0 0 34 36" fill="none" stroke="#989898" strokeOpacity="0.8" strokeLinecap="round" aria-hidden="true">
            <circle cx="9" cy="9" r="7" strokeWidth="3" />
            <path d="M8 17V33" strokeWidth="5" />
            <path d="M16 14L31 29" strokeWidth="5" />
          </svg>
          <div>
            <ActivationTitle>Windows aktivieren</ActivationTitle>
            <p>Wechseln Sie zu den PC-Einstellungen, um Windows zu aktivieren.</p>
          </div>
        </Activation>
      </AppWindow>
    </Desktop>
  );
}
